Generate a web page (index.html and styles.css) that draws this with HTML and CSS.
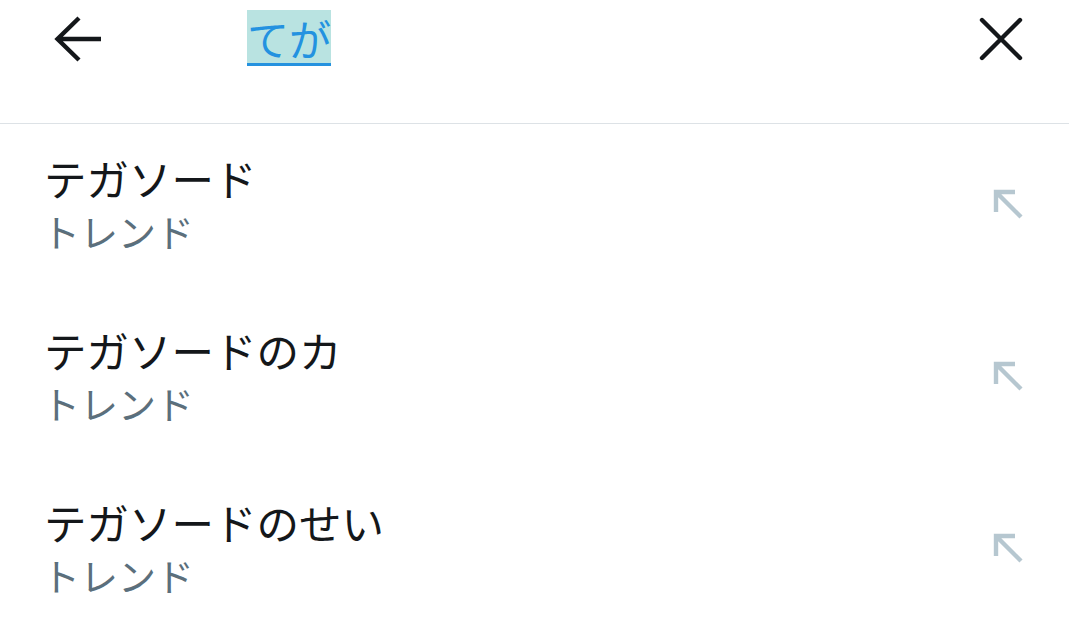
FILE: index.html
```html
<!DOCTYPE html>
<html lang="ja">
<head>
<meta charset="utf-8">
<link rel="stylesheet" href="styles.css">
</head>
<body>
<header class="bar">
  <svg class="back" width="50" height="50" viewBox="0 0 50 50"><path d="M47 25H4M25 4L3.5 25L25 46" fill="none" stroke="#14171a" stroke-width="4.4" stroke-linejoin="miter"/></svg>
  <div class="query"><span class="q">てが</span></div>
  <svg class="close" width="50" height="50" viewBox="0 0 50 50"><path d="M6 6L44 44M44 6L6 44" fill="none" stroke="#14171a" stroke-width="4.4" stroke-linecap="round"/></svg>
</header>
<ul class="list">
  <li class="item"><div class="txt"><div class="title">テガソード</div><div class="sub">トレンド</div></div><svg class="fill" width="40" height="40" viewBox="0 0 40 40"><path d="M28 7H9V27M9 7L34 32" fill="none" stroke="#b6c7d0" stroke-width="4.4"/></svg></li>
  <li class="item"><div class="txt"><div class="title">テガソードのカ</div><div class="sub">トレンド</div></div><svg class="fill" width="40" height="40" viewBox="0 0 40 40"><path d="M28 7H9V27M9 7L34 32" fill="none" stroke="#b6c7d0" stroke-width="4.4"/></svg></li>
  <li class="item"><div class="txt"><div class="title">テガソードのせい</div><div class="sub">トレンド</div></div><svg class="fill" width="40" height="40" viewBox="0 0 40 40"><path d="M28 7H9V27M9 7L34 32" fill="none" stroke="#b6c7d0" stroke-width="4.4"/></svg></li>
</ul>
</body>
</html>
```
FILE: styles.css
```css
html, body {
  margin: 0;
  padding: 0;
  background: #fff;
  font-family: "Noto Sans CJK JP", "Noto Sans", sans-serif;
  overflow: hidden;
}
.bar {
  display: flex;
  align-items: flex-start;
  height: 123px;
  border-bottom: 1px solid #dde2e6;
  box-sizing: content-box;
}
.back {
  margin-left: 54px;
  margin-top: 14px;
  flex: none;
}
.query {
  margin-left: 143px;
  margin-top: 10px;
  flex: 1;
}
.q {
  display: inline-block;
  height: 56px;
  line-height: 56px;
  font-size: 42px;
  color: #2392e0;
  background: #b9e3e1;
  box-shadow: inset 0 -3px 0 #2592df;
  box-sizing: border-box;
}
.close {
  margin-right: 43px;
  margin-top: 14px;
  flex: none;
}
.list {
  list-style: none;
  margin: 0;
  padding: 0;
}
.item {
  display: flex;
  align-items: center;
  height: 172px;
  padding: 0 42px 0 47px;
  box-sizing: border-box;
}
.txt {
  flex: 1;
  margin-top: -12px;
}
.title {
  font-size: 42.5px;
  line-height: 50px;
  color: #14171a;
  margin-left: -3px;
}
.sub {
  font-size: 38px;
  line-height: 50px;
  margin-top: 3px;
  color: #5b6f7c;
  margin-left: -5px;
}
.fill {
  flex: none;
  margin-top: -10px;
}
```
